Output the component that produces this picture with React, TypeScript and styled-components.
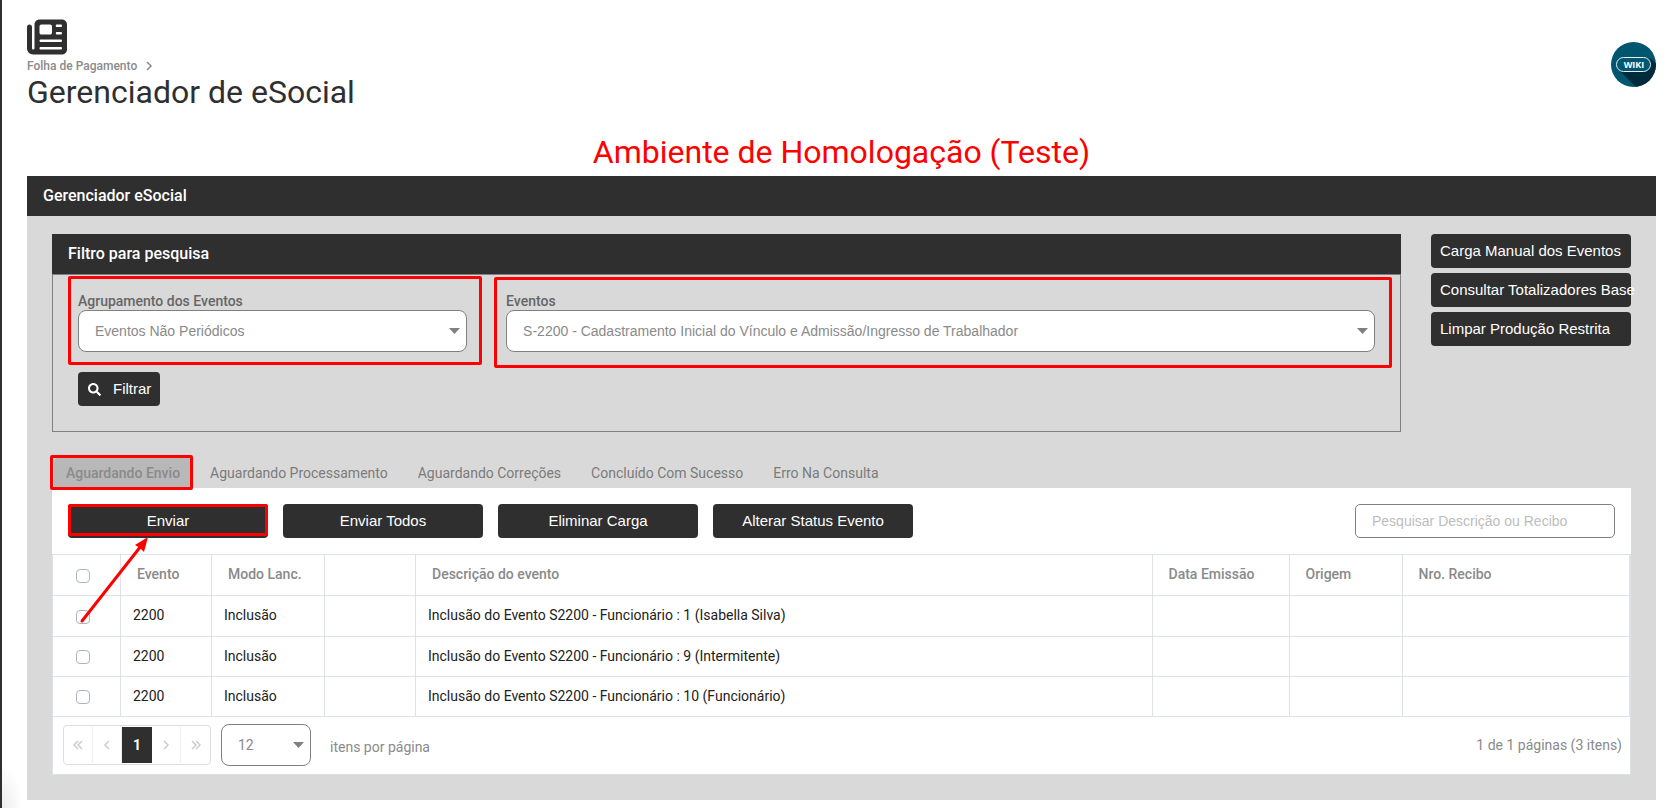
import React from "react";
import styled, { createGlobalStyle, css } from "styled-components";
import { FaNewspaper } from "react-icons/fa6";
import { FaSearch } from "react-icons/fa";

const dark = "#2f2f2f";
const grey = "#808080";
const muted = "#8a8a8a";
const line = "#dee2e6";
const arial = `"Liberation Sans", Arial, sans-serif`;

const GlobalStyle = createGlobalStyle`
  *, *::before, *::after { box-sizing: border-box; }
  body {
    margin: 0;
    background: #fff;
    color: #212121;
    font: 14px/18px Roboto, "Liberation Sans", sans-serif;
  }
  button, input, select { margin: 0; font: inherit; }
`;

const Page = styled.div`
  min-height: 100vh;
  padding: 17px 13px 7px 25px;
  border-left: 2px solid ${dark};
  background: radial-gradient(ellipse 20px 44px at 0 100%, #ececec 0, #fff 100%);
`;

const PageHeader = styled.header`
  display: flex;
  align-items: center;
  justify-content: space-between;
  margin-bottom: 24px;
`;

const AppIcon = styled(FaNewspaper)`
  display: block;
  width: 40px;
  height: 40px;
  color: ${dark};
`;

const Breadcrumb = styled.nav`
  display: flex;
  align-items: center;
  gap: 6px;
  font-size: 12px;
  font-weight: 500;
  color: ${muted};
  a {
    color: inherit;
    text-decoration: none;
  }
`;

const Title = styled.h1`
  margin: 0;
  font-size: 32px;
  line-height: 34px;
  font-weight: 400;
  color: ${dark};
`;

const WikiLink = styled.a`
  display: block;
  width: 45px;
  height: 45px;
  margin-top: 3px;
  svg {
    display: block;
  }
`;

const Environment = styled.p`
  margin: 0 0 5px;
  font-size: 32px;
  line-height: 38px;
  text-align: center;
  color: #f00;
`;

const PanelTitle = styled.h2`
  margin: 0;
  padding: 0 16px;
  font-size: 16px;
  line-height: 40px;
  font-weight: 500;
  color: #fff;
  background: ${dark};
`;

const PanelBody = styled.div`
  padding: 18px 25px 25px;
  background: #d9d9d9;
`;

const TopRow = styled.div`
  display: grid;
  grid-template-columns: minmax(0, 1fr) 200px;
  gap: 30px;
  align-items: start;
  margin-bottom: 26px;
`;

const Filter = styled.form`
  padding: 17px 25px 25px;
  border: 1px solid ${grey};
`;

const Fields = styled.div`
  display: grid;
  grid-template-columns: 30% minmax(0, 1fr);
  gap: 39px;
  margin-bottom: 20px;
`;

const Field = styled.div`
  position: relative;
  label {
    display: block;
    font-weight: 500;
    color: #666;
  }
`;

const SelectBox = styled.div<{ $compact?: boolean }>`
  position: relative;
  width: ${(p) => (p.$compact ? "90px" : "100%")};
  select {
    display: block;
    width: 100%;
    height: 42px;
    padding: 0 26px 0 16px;
    border: 1px solid ${grey};
    border-radius: 8px;
    background: #fff;
    color: ${muted};
    appearance: none;
    font-family: ${(p) => (p.$compact ? "inherit" : arial)};
  }
  svg {
    position: absolute;
    right: 7px;
    top: 18px;
    pointer-events: none;
  }
`;

const Button = styled.button<{ $kind?: "side" | "tool" }>`
  display: flex;
  align-items: center;
  justify-content: ${(p) => (p.$kind === "tool" ? "center" : "flex-start")};
  gap: 12px;
  width: ${(p) => (p.$kind ? "200px" : "auto")};
  height: 34px;
  padding: 0 9px;
  border: 0;
  border-radius: 4px;
  background: ${dark};
  color: #fff;
  font-family: ${arial};
  font-size: 15px;
  white-space: nowrap;
  cursor: pointer;
  svg {
    width: 13px;
    height: 13px;
    margin-left: 1px;
  }
`;

const SideButtons = styled.div`
  display: grid;
  gap: 5px;
`;

const Tabs = styled.div`
  position: relative;
  display: flex;
  gap: 6px;
  padding-left: 2px;
`;

const Tab = styled.button<{ $active?: boolean }>`
  position: relative;
  height: 30px;
  padding: 0 12px;
  border: 0;
  border-radius: 4px 4px 0 0;
  background: none;
  color: #7b7b7b;
  cursor: pointer;
  ${(p) =>
    p.$active &&
    css`
      background: #b8b8b8;
      color: ${muted};
      font-weight: 500;
    `}
`;

const Highlight = styled.span<{ $inset: string }>`
  position: absolute;
  z-index: 1;
  inset: ${(p) => p.$inset};
  border: 3px solid #f00;
  border-radius: 2px;
  pointer-events: none;
`;

const Arrow = styled.svg`
  position: absolute;
  z-index: 1;
  left: 10px;
  top: 32px;
  pointer-events: none;
`;

const Results = styled.section`
  background: #fff;
`;

const Toolbar = styled.div`
  display: flex;
  gap: 15px;
  padding: 16px;
`;

const Anchor = styled.div`
  position: relative;
`;

const Search = styled.input`
  width: 260px;
  height: 34px;
  margin-left: auto;
  padding: 0 16px;
  border: 1px solid ${grey};
  border-radius: 5px;
  font-family: ${arial};
  &::placeholder {
    color: #bdbdbd;
  }
`;

const Table = styled.table`
  width: 100%;
  table-layout: fixed;
  border-collapse: collapse;
  border-right: 2px solid ${line};
  th,
  td {
    height: 41px;
    padding: 0 12px 2px;
    border: 1px solid ${line};
    text-align: left;
  }
  th {
    padding: 0 16px 2px;
    font-weight: 500;
    color: ${muted};
  }
  tr:nth-child(n + 2) td {
    height: 40px;
  }
`;

const Check = styled.input`
  display: block;
  width: 14px;
  height: 14px;
  margin: 3px 0 0 11px;
  border: 1px solid #adb5bd;
  border-radius: 4px;
  background: #fff;
  appearance: none;
  th & {
    margin-left: 7px;
  }
`;

const Footer = styled.footer`
  display: flex;
  align-items: center;
  gap: 10px;
  height: 58px;
  padding: 0 8px 2px 10px;
  border: 1px solid ${line};
  border-top: 0;
  color: ${muted};
`;

const Pager = styled.nav`
  display: flex;
  height: 40px;
  padding: 1px 0;
  border: 1px solid #ddd;
  border-radius: 4px;
`;

const PageButton = styled.button<{ $current?: boolean }>`
  display: grid;
  place-items: center;
  width: 29px;
  padding: 0;
  border: 0;
  border-right: 1px solid #eee;
  background: none;
  color: #ccc;
  &:last-child {
    border-right: 0;
  }
  ${(p) =>
    p.$current &&
    css`
      width: 30px;
      border-right: 0;
      background: ${dark};
      color: #fff;
      font-weight: 700;
    `}
`;

const PerPage = styled.label`
  margin: 4px 0 0 9px;
`;

const Summary = styled.span`
  margin-left: auto;
`;

const Caret = () => (
  <svg width="11" height="6" viewBox="0 0 11 6" aria-hidden="true">
    <path d="M0 0h11L5.500 6z" fill={grey} />
  </svg>
);

const chevrons: Record<string, string> = {
  first: "M6 1L2 5l4 4M10 1L6 5l4 4",
  prev: "M8 1L4 5l4 4",
  next: "M4 1l4 4-4 4",
  last: "M2 1l4 4-4 4M6 1l4 4-4 4",
};

const Chevron = ({ kind }: { kind: string }) => (
  <svg width="12" height="10" viewBox="0 0 12 10" fill="none" stroke="currentColor" strokeWidth="1.500" aria-hidden="true">
    <path d={chevrons[kind]} />
  </svg>
);

const tabs = ["Aguardando Envio", "Aguardando Processamento", "Aguardando Correções", "Concluído Com Sucesso", "Erro Na Consulta"];

const columns = [
  { label: "Evento", width: "91px" },
  { label: "Modo Lanc.", width: "113px" },
  { label: "", width: "91px" },
  { label: "Descrição do evento", width: "auto" },
  { label: "Data Emissão", width: "137px" },
  { label: "Origem", width: "113px" },
  { label: "Nro. Recibo", width: "228px" },
];

const rows = ["1 (Isabella Silva)", "9 (Intermitente)", "10 (Funcionário)"];

export default function App() {
  return (
    <Page>
      <GlobalStyle />
      <PageHeader>
        <div>
          <AppIcon aria-hidden="true" />
          <Breadcrumb aria-label="Navegação">
            <a href="#folha">Folha de Pagamento</a>
            <Chevron kind="next" />
          </Breadcrumb>
          <Title>Gerenciador de eSocial</Title>
        </div>
        <WikiLink href="#wiki">
          <svg width="45" height="45" viewBox="0 0 45 45">
            <defs>
              <clipPath id="disc">
                <circle cx="22.500" cy="22.500" r="22.500" />
              </clipPath>
            </defs>
            <g clipPath="url(#disc)">
              <path d="M0 0h45v45H0z" fill="#00566f" />
              <path d="M8 28L26 46h20V22l-7-6-1 12z" fill="#002b3c" />
            </g>
            <rect x="5.500" y="15.500" width="34" height="14" rx="7" fill="#00566f" stroke="#e6eff2" />
            <text x="23" y="26" textAnchor="middle" fontFamily="Open Sans, sans-serif" fontSize="9" fontWeight="700" fill="#fff">
              WIKI
            </text>
          </svg>
        </WikiLink>
      </PageHeader>

      <main>
        <Environment>Ambiente de Homologação (Teste)</Environment>
        <PanelTitle>Gerenciador eSocial</PanelTitle>
        <PanelBody>
          <TopRow>
            <div>
              <PanelTitle as="h3">Filtro para pesquisa</PanelTitle>
              <Filter onSubmit={(e) => e.preventDefault()}>
                <Fields>
                  <Field>
                    <label htmlFor="grupo">Agrupamento dos Eventos</label>
                    <SelectBox>
                      <select id="grupo">
                        <option>Eventos Não Periódicos</option>
                      </select>
                      <Caret />
                    </SelectBox>
                    <Highlight $inset="-16px -15px -13px -10px" />
                  </Field>
                  <Field>
                    <label htmlFor="evento">Eventos</label>
                    <SelectBox>
                      <select id="evento">
                        <option>S-2200 - Cadastramento Inicial do Vínculo e Admissão/Ingresso de Trabalhador</option>
                      </select>
                      <Caret />
                    </SelectBox>
                    <Highlight $inset="-15px -17px -16px -12px" />
                  </Field>
                </Fields>
                <Button type="submit">
                  <FaSearch aria-hidden="true" />
                  Filtrar
                </Button>
              </Filter>
            </div>
            <SideButtons>
              <Button type="button" $kind="side">Carga Manual dos Eventos</Button>
              <Button type="button" $kind="side">Consultar Totalizadores Base</Button>
              <Button type="button" $kind="side">Limpar Produção Restrita</Button>
            </SideButtons>
          </TopRow>

          <Tabs role="tablist">
            {tabs.map((label, i) => (
              <Tab key={label} type="button" role="tab" aria-selected={i === 0} $active={i === 0}>
                {label}
                {i === 0 && <Highlight $inset="-3px -1px -2px -4px" />}
              </Tab>
            ))}
          </Tabs>

          <Results>
            <Toolbar>
              <Anchor>
                <Button type="button" $kind="tool">Enviar</Button>
                <Highlight $inset="0 0 2px 0" />
                <Arrow width="72" height="88" viewBox="0 0 72 88" aria-hidden="true">
                  <path d="M4 85L63 10" stroke="#f00" strokeWidth="3" strokeLinecap="round" />
                  <path d="M70 1L66 16L62 12L57 9z" fill="#f00" />
                </Arrow>
              </Anchor>
              <Button type="button" $kind="tool">Enviar Todos</Button>
              <Button type="button" $kind="tool">Eliminar Carga</Button>
              <Button type="button" $kind="tool">Alterar Status Evento</Button>
              <Search type="search" aria-label="Pesquisar" placeholder="Pesquisar Descrição ou Recibo" />
            </Toolbar>

            <Table>
              <colgroup>
                <col style={{ width: "68px" }} />
                {columns.map((c, i) => (
                  <col key={i} style={{ width: c.width }} />
                ))}
              </colgroup>
              <thead>
                <tr>
                  <th>
                    <Check type="checkbox" aria-label="Selecionar todos" />
                  </th>
                  {columns.map((c, i) => (
                    <th key={i}>{c.label}</th>
                  ))}
                </tr>
              </thead>
              <tbody>
                {rows.map((who) => (
                  <tr key={who}>
                    <td>
                      <Check type="checkbox" aria-label={`Selecionar funcionário ${who}`} />
                    </td>
                    <td>2200</td>
                    <td>Inclusão</td>
                    <td />
                    <td>Inclusão do Evento S2200 - Funcionário : {who}</td>
                    <td />
                    <td />
                    <td />
                  </tr>
                ))}
              </tbody>
            </Table>

            <Footer>
              <Pager aria-label="Paginação">
                <PageButton type="button" aria-label="Primeira página"><Chevron kind="first" /></PageButton>
                <PageButton type="button" aria-label="Página anterior"><Chevron kind="prev" /></PageButton>
                <PageButton type="button" $current aria-current="page">1</PageButton>
                <PageButton type="button" aria-label="Próxima página"><Chevron kind="next" /></PageButton>
                <PageButton type="button" aria-label="Última página"><Chevron kind="last" /></PageButton>
              </Pager>
              <SelectBox $compact>
                <select id="por-pagina">
                  <option>12</option>
                </select>
                <Caret />
              </SelectBox>
              <PerPage htmlFor="por-pagina">itens por página</PerPage>
              <Summary>1 de 1 páginas (3 itens)</Summary>
            </Footer>
          </Results>
        </PanelBody>
      </main>
    </Page>
  );
}
